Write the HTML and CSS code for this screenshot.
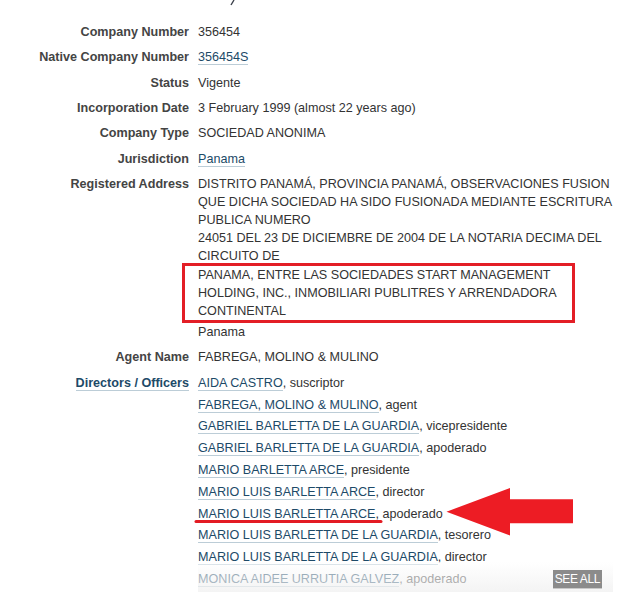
FILE: index.html
```html
<!DOCTYPE html>
<html lang="en">
<head>
  <meta charset="UTF-8">
  <title>Company details</title>
  <link rel="stylesheet" href="styles.css">
</head>
<body>

  <div class="page">
    <dl class="attributes">
      <dt>Company Number</dt>
      <dd>356454</dd>

      <dt>Native Company Number</dt>
      <dd><a href="#">356454S</a></dd>

      <dt>Status</dt>
      <dd>Vigente</dd>

      <dt>Incorporation Date</dt>
      <dd>3 February 1999 (almost 22 years ago)</dd>

      <dt>Company Type</dt>
      <dd>SOCIEDAD ANONIMA</dd>

      <dt>Jurisdiction</dt>
      <dd><a href="#">Panama</a></dd>

      <dt>Registered Address</dt>
      <dd class="address">
        DISTRITO PANAMÁ, PROVINCIA PANAMÁ, OBSERVACIONES FUSION<br>
        QUE DICHA SOCIEDAD HA SIDO FUSIONADA MEDIANTE ESCRITURA<br>
        PUBLICA NUMERO<br>
        24051 DEL 23 DE DICIEMBRE DE 2004 DE LA NOTARIA DECIMA DEL<br>
        CIRCUITO DE
        <div class="marked">
          PANAMA, ENTRE LAS SOCIEDADES START MANAGEMENT<br>
          HOLDING, INC., INMOBILIARI PUBLITRES Y ARRENDADORA<br>
          CONTINENTAL
        </div>
        Panama
      </dd>

      <dt>Agent Name</dt>
      <dd>FABREGA, MOLINO &amp; MULINO</dd>

      <dt><a href="#">Directors / Officers</a></dt>
      <dd class="officers-cell">
        <ul class="officers">
          <li><a href="#">AIDA CASTRO</a>, suscriptor</li>
          <li><a href="#">FABREGA, MOLINO &amp; MULINO</a>, agent</li>
          <li><a href="#">GABRIEL BARLETTA DE LA GUARDIA</a>, vicepresidente</li>
          <li><a href="#">GABRIEL BARLETTA DE LA GUARDIA</a>, apoderado</li>
          <li><a href="#">MARIO BARLETTA ARCE</a>, presidente</li>
          <li><a href="#">MARIO LUIS BARLETTA ARCE</a>, director</li>
          <li><a href="#">MARIO LUIS BARLETTA ARCE</a>, apoderado</li>
          <li><a href="#">MARIO LUIS BARLETTA DE LA GUARDIA</a>, tesorero</li>
          <li><a href="#">MARIO LUIS BARLETTA DE LA GUARDIA</a>, director</li>
          <li><a href="#">MONICA AIDEE URRUTIA GALVEZ</a>, apoderado</li>
        </ul>
        <a class="see-all" href="#">SEE ALL</a>
      </dd>
    </dl>

    <!-- annotation layer drawn over the screenshot -->
    <svg class="marks" width="627" height="600" viewBox="0 0 627 600">
      <line x1="234" y1="0" x2="231" y2="5" stroke="#3a3f4a" stroke-width="1.4"/>
      <line x1="196" y1="521.5" x2="381" y2="521.5" stroke="#e31b23" stroke-width="3" stroke-linecap="round"/>
      <polygon points="446.5,511.7 510,488 510,499.3 573,499.3 573,523.3 510,523.3 510,535.5" fill="#ed1c24"/>
    </svg>
  </div>

</body>
</html>
```

FILE: styles.css
```css
body {
  margin: 0;
  background-color: #fff;
  color: #333;
  font-family: "Liberation Sans", Arial, sans-serif;
  font-size: 12.6px;
  line-height: 18px;
}

.page {
  position: relative;
  width: 627px;
  height: 600px;
  overflow: hidden;
}

a {
  color: #1d4a68;
  text-decoration: none;
  border-bottom: 1px solid #bccdd7;
}

.attributes {
  display: grid;
  grid-template-columns: 181px 415px;
  column-gap: 9px;
  row-gap: 7.35px;
  margin: 0;
  padding: 23px 0 0 8px;
}

.attributes dt {
  text-align: right;
  font-weight: bold;
  color: #444;
}

.attributes dd {
  margin: 0;
}

.address {
  white-space: nowrap;
}

.address .marked {
  width: 393px;
  box-sizing: border-box;
  margin: -2px 0 0 -16px;
  padding-left: 13px;
  border: 3px solid #e31e26;
}

.officers-cell {
  position: relative;
}

.officers {
  position: relative;
  list-style: none;
  margin: 0;
  padding: 0;
}

.officers li {
  padding-bottom: 3.8px;
}

.officers::after {
  content: "";
  position: absolute;
  left: 0;
  right: 0;
  bottom: 0;
  height: 30px;
  background: linear-gradient(to bottom, rgba(255, 255, 255, 0.45), rgba(240, 240, 240, 0.75));
}

.see-all {
  position: absolute;
  right: 11px;
  bottom: 3px;
  z-index: 1;
  padding: 0 2px;
  background-color: #8b8b8b;
  color: #fff;
  border-bottom: 1px solid #c9c9c9;
  font-size: 12px;
  letter-spacing: -0.4px;
  line-height: 18px;
}

.marks {
  position: absolute;
  left: 0;
  top: 0;
  pointer-events: none;
}
```
